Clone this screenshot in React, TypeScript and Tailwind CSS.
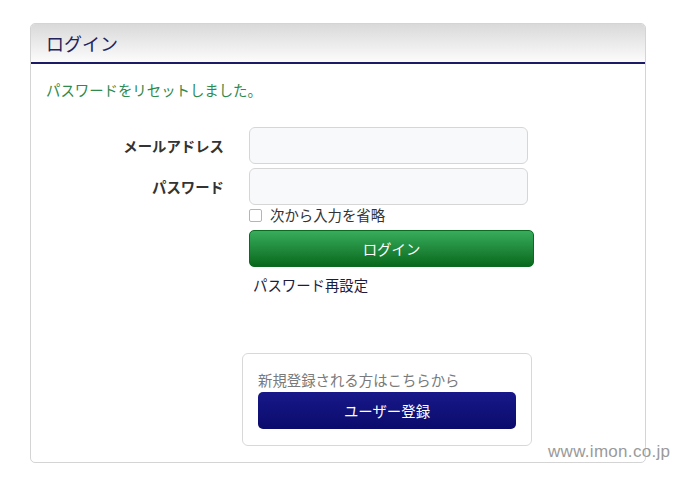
import React from "react";

const jp = { fontFamily: '"Noto Sans CJK JP", "Noto Sans", sans-serif' };

export default function App() {
  return (
    <div className="relative w-[678px] h-[478px] bg-white" style={jp}>
      <div className="pt-[23px] pl-[30px]">
        <div className="w-[616px] h-[440px] border border-[#d4d4d4] rounded-[5px] bg-white overflow-hidden">
          <div className="h-[40px] bg-gradient-to-b from-[#d9d9d9] to-[#fcfcfc] border-b-2 border-[#1c1c66] px-[15px] flex items-center">
            <span className="text-[18px] leading-[24px] text-[#22225e]">ログイン</span>
          </div>
          <div className="px-[15px]">
            <div className="mt-[16px] text-[14.4px] leading-[20px] text-[#2f8a4c]">パスワードをリセットしました。</div>
            <div className="mt-[27px] flex items-center">
              <div className="w-[178px] text-right text-[14.4px] font-bold text-[#333]">メールアドレス</div>
              <div className="ml-[25px] w-[279px] h-[37px] rounded-[6px] border border-[#d6d6d6] bg-[#f8f9fb]"></div>
            </div>
            <div className="mt-[4px] flex items-center">
              <div className="w-[178px] text-right text-[14.4px] font-bold text-[#333]">パスワード</div>
              <div className="ml-[25px] w-[279px] h-[37px] rounded-[6px] border border-[#d6d6d6] bg-[#f8f9fb]"></div>
            </div>
            <div className="ml-[203px] h-[20px] flex items-center">
              <div className="w-[13px] h-[13px] border border-[#b5b5b5] rounded-[2px] bg-white"></div>
              <span className="ml-[8px] text-[14.4px] leading-[20px] text-[#333]">次から入力を省略</span>
            </div>
            <div className="mt-[5px] ml-[203px] w-[285px] h-[37px] rounded-[5px] bg-gradient-to-b from-[#37ad5c] to-[#08691b] border border-[#0b6a20] flex items-center justify-center">
              <span className="text-[14.4px] text-white">ログイン</span>
            </div>
            <div className="mt-[8px] ml-[207px] text-[14.4px] leading-[20px] text-[#1c1c40]">パスワード再設定</div>
            <div className="mt-[58px] ml-[196px] w-[290px] h-[93px] border border-[#d8d8d8] rounded-[6px] pt-[16px] pl-[15px]">
              <div className="text-[14.4px] leading-[20px] text-[#7a7a7a]">新規登録される方はこちらから</div>
              <div className="mt-[2px] w-[258px] h-[37px] rounded-[5px] bg-gradient-to-b from-[#18188a] to-[#0b0b6c] flex items-center justify-center">
                <span className="text-[14.4px] text-white">ユーザー登録</span>
              </div>
            </div>
          </div>
        </div>
      </div>
      <div
        className="absolute left-[548px] top-[441px] text-[17px] leading-[22px] text-[#9a9a9a] tracking-[0.3px]"
        style={{ fontFamily: '"Liberation Sans", Arial, sans-serif', textShadow: "0 0 2px #fff" }}
      >
        www.imon.co.jp
      </div>
    </div>
  );
}
